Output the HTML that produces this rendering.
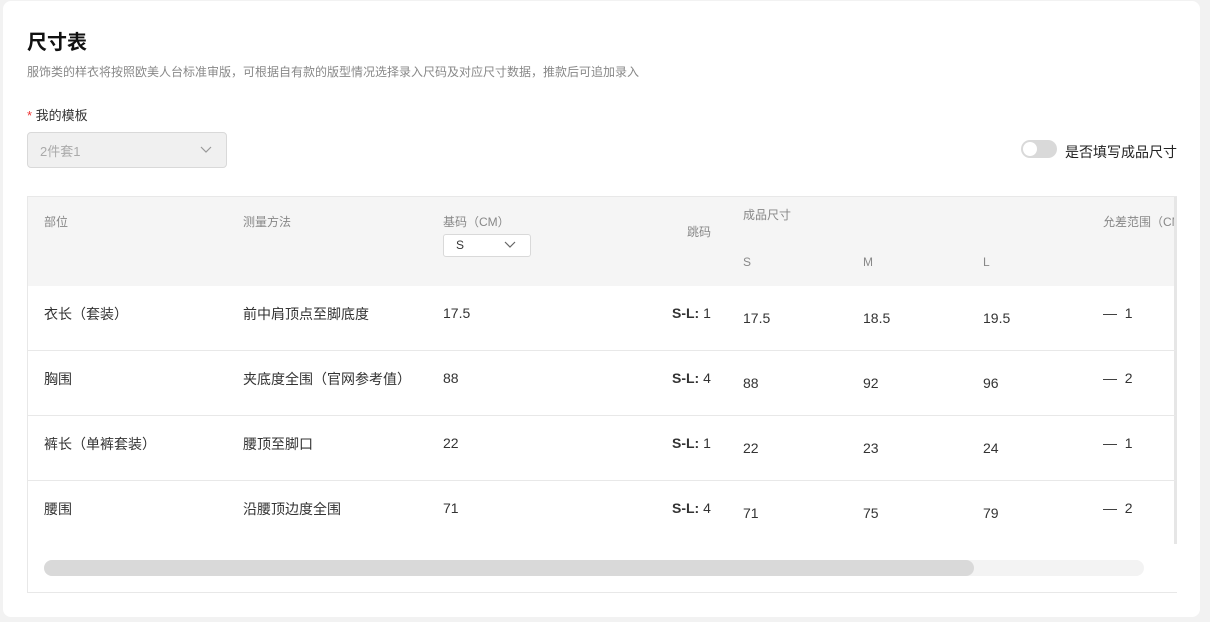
<!DOCTYPE html><html><head><meta charset="utf-8"><style>
*{margin:0;padding:0;box-sizing:border-box}
body{width:1210px;height:622px;background:#f2f2f2;font-family:"Liberation Sans","Noto Sans CJK SC",sans-serif;color:#333;position:relative;overflow:hidden}
.card{position:absolute;left:3px;top:1px;width:1197px;height:616px;background:#fff;border-radius:8px}
.a{position:absolute;white-space:nowrap}
.t{font-size:14px;color:#333}
.h{font-size:12px;color:#888}
.n{font-size:14px;color:#333}
.row{position:absolute;left:28px;width:1148px;height:1px;background:#e8e8e8}
</style></head><body>
<div class="card"></div>
<div class="a" style="left:27px;top:26px;font-size:20px;font-weight:bold;color:#111">尺寸表</div>
<div class="a" style="left:27px;top:63px;font-size:12px;color:#888">服饰类的样衣将按照欧美人台标准审版，可根据自有款的版型情况选择录入尺码及对应尺寸数据，推款后可追加录入</div>
<div class="a" style="left:27px;top:105px;font-size:13px"><span style="color:#e33">*</span> 我的模板</div>
<div class="a" style="left:27px;top:132px;width:200px;height:36px;background:#f0f0f0;border:1px solid #d9d9d9;border-radius:4px"></div>
<div class="a" style="left:40px;top:141px;font-size:13px;color:#aaa">2件套1</div>
<svg class="a" style="left:199px;top:145px" width="14" height="10"><path d="M2 2l5 5 5-5" fill="none" stroke="#999" stroke-width="1.2"/></svg>
<div class="a" style="left:1021px;top:140px;width:36px;height:18px;border-radius:9px;background:#d9d9d9"></div>
<div class="a" style="left:1023px;top:142px;width:14px;height:14px;border-radius:7px;background:#fff"></div>
<div class="a" style="left:1065px;top:142px;font-size:14px;color:#222">是否填写成品尺寸</div>
<div class="a" style="left:27px;top:196px;width:1150px;height:397px;border:1px solid #e8e8e8;border-right:none"></div>
<div class="a" style="left:28px;top:197px;width:1148px;height:89px;background:#f5f5f5"></div>
<div class="a" style="left:1174px;top:197px;width:3px;height:347px;background:#e6e6e6"></div>
<div class="a h" style="left:44px;top:213px">部位</div>
<div class="a h" style="left:243px;top:213px">测量方法</div>
<div class="a h" style="left:443px;top:213px">基码（CM）</div>
<div class="a" style="left:443px;top:234px;width:88px;height:23px;background:#fff;border:1px solid #d9d9d9;border-radius:3px"></div>
<div class="a" style="left:456px;top:238px;font-size:12px;color:#333">S</div>
<svg class="a" style="left:503px;top:240px" width="14" height="10"><path d="M2 2l5 5 5-5" fill="none" stroke="#666" stroke-width="1.2"/></svg>
<div class="a h" style="left:687px;top:223px">跳码</div>
<div class="a h" style="left:743px;top:206px">成品尺寸</div>
<div class="a h" style="left:743px;top:255px">S</div>
<div class="a h" style="left:863px;top:255px">M</div>
<div class="a h" style="left:983px;top:255px">L</div>
<div class="a h" style="left:1103px;top:213px;width:71px;overflow:hidden">允差范围（CM）</div>
<div class="row" style="top:350px"></div><div class="row" style="top:415px"></div><div class="row" style="top:480px"></div>

<div class="a t" style="left:44px;top:304px">衣长（套装）</div><div class="a t" style="left:243px;top:304px">前中肩顶点至脚底度</div><div class="a n" style="left:443px;top:305px">17.5</div><div class="a n" style="left:672px;top:305px"><b>S-L:</b> 1</div><div class="a n" style="left:743px;top:310px">17.5</div><div class="a n" style="left:863px;top:310px">18.5</div><div class="a n" style="left:983px;top:310px">19.5</div><div class="a n" style="left:1103px;top:305px">—&nbsp; 1</div>

<div class="a t" style="left:44px;top:369px">胸围</div><div class="a t" style="left:243px;top:369px">夹底度全围（官网参考值）</div><div class="a n" style="left:443px;top:370px">88</div><div class="a n" style="left:672px;top:370px"><b>S-L:</b> 4</div><div class="a n" style="left:743px;top:375px">88</div><div class="a n" style="left:863px;top:375px">92</div><div class="a n" style="left:983px;top:375px">96</div><div class="a n" style="left:1103px;top:370px">—&nbsp; 2</div>

<div class="a t" style="left:44px;top:434px">裤长（单裤套装）</div><div class="a t" style="left:243px;top:434px">腰顶至脚口</div><div class="a n" style="left:443px;top:435px">22</div><div class="a n" style="left:672px;top:435px"><b>S-L:</b> 1</div><div class="a n" style="left:743px;top:440px">22</div><div class="a n" style="left:863px;top:440px">23</div><div class="a n" style="left:983px;top:440px">24</div><div class="a n" style="left:1103px;top:435px">—&nbsp; 1</div>

<div class="a t" style="left:44px;top:499px">腰围</div><div class="a t" style="left:243px;top:499px">沿腰顶边度全围</div><div class="a n" style="left:443px;top:500px">71</div><div class="a n" style="left:672px;top:500px"><b>S-L:</b> 4</div><div class="a n" style="left:743px;top:505px">71</div><div class="a n" style="left:863px;top:505px">75</div><div class="a n" style="left:983px;top:505px">79</div><div class="a n" style="left:1103px;top:500px">—&nbsp; 2</div>

<div class="a" style="left:44px;top:560px;width:1100px;height:16px;border-radius:8px;background:#f3f3f3"></div>
<div class="a" style="left:44px;top:560px;width:930px;height:16px;border-radius:8px;background:#d9d9d9"></div>
</body></html>
